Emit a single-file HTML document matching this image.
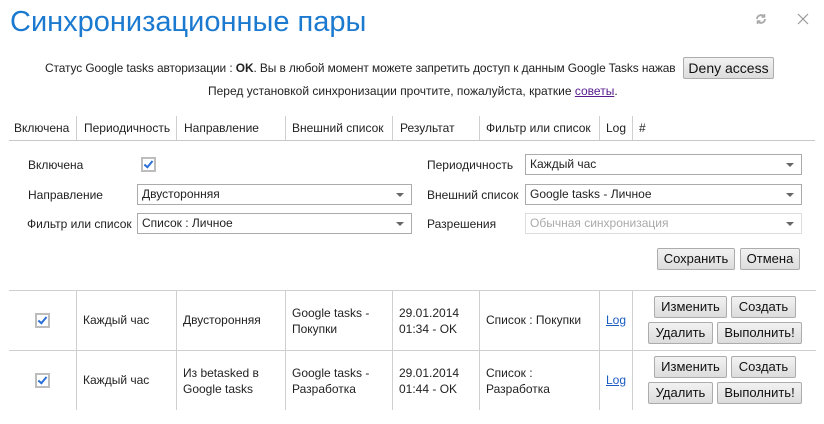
<!DOCTYPE html>
<html><head><meta charset="utf-8"><style>
body{margin:0;width:824px;height:424px;background:#fff;font-family:"Liberation Sans","DejaVu Sans",sans-serif;font-size:12px;color:#222;position:relative;overflow:hidden}
.a{position:absolute;white-space:nowrap}
.btn{position:absolute;border:1px solid #acacac;border-radius:2px;background:linear-gradient(#f2f2f2,#dcdcdc);font-size:13px;color:#111;text-align:center;box-sizing:border-box;line-height:20px;height:22px}
.sel{position:absolute;border:1px solid #ababab;box-sizing:border-box;height:21px;line-height:19px;padding-left:4px;font-size:12px;background:#fff}
.sel:after{content:"";position:absolute;right:7px;top:8px;border-left:4px solid transparent;border-right:4px solid transparent;border-top:4px solid #666}
.vl{position:absolute;width:1px;background:#cfcfcf}
.hl{position:absolute;height:1px;background:#cfcfcf}
.cb{position:absolute;width:11px;height:11px;border:2px solid #bdbdbd;background:#fff}
.cb:after{content:"";position:absolute;left:3px;top:0px;width:3px;height:7px;border:solid #2a6fd8;border-width:0 2px 2px 0;transform:rotate(40deg)}
.lk{color:#1a5bc0;text-decoration:underline}
</style></head><body>
<div class="a" style="left:10px;top:6px;font-size:29px;color:#1b7ad0">Синхронизационные пары</div>
<svg class="a" style="left:755px;top:13px" width="12" height="12" viewBox="0 0 12 12"><path d="M2 6a4 4 0 0 1 7-2.5M10 6a4 4 0 0 1-7 2.5" stroke="#aaa" stroke-width="1.8" fill="none"/><path d="M9.5 1v3h-3M2.5 11V8h3" stroke="#aaa" stroke-width="1.5" fill="none"/></svg>
<svg class="a" style="left:797px;top:13px" width="12" height="12" viewBox="0 0 12 12"><path d="M1 1L11 11M11 1L1 11" stroke="#999" stroke-width="1.2"/></svg>
<div class="a" style="left:45px;top:61px;font-size:11.9px;letter-spacing:-0.08px">Статус Google tasks авторизации : <b>OK</b>. Вы в любой момент можете запретить доступ к данным Google Tasks нажав</div>
<div class="btn" style="left:683px;top:57px;width:91px;font-size:14px">Deny access</div>
<div class="a" style="left:208px;top:84px">Перед установкой синхронизации прочтите, пожалуйста, краткие <span style="color:#551a8b;text-decoration:underline">советы</span>.</div>

<div class="a" style="left:14px;top:121px">Включена</div>
<div class="a" style="left:84px;top:121px">Периодичность</div>
<div class="a" style="left:184px;top:121px">Направление</div>
<div class="a" style="left:292px;top:121px">Внешний список</div>
<div class="a" style="left:400px;top:121px">Результат</div>
<div class="a" style="left:486px;top:121px">Фильтр или список</div>
<div class="a" style="left:606px;top:121px">Log</div>
<div class="a" style="left:639px;top:121px">#</div>
<div class="vl" style="left:76px;top:116px;height:24px"></div>
<div class="vl" style="left:176px;top:116px;height:24px"></div>
<div class="vl" style="left:285px;top:116px;height:24px"></div>
<div class="vl" style="left:392px;top:116px;height:24px"></div>
<div class="vl" style="left:479px;top:116px;height:24px"></div>
<div class="vl" style="left:599px;top:116px;height:24px"></div>
<div class="vl" style="left:632px;top:116px;height:24px"></div>
<div class="hl" style="left:9px;top:140px;width:806px;background:#c8c8c8"></div>

<div class="a" style="left:28px;top:158px">Включена</div>
<div class="cb" style="left:141px;top:157px"></div>
<div class="a" style="left:28px;top:188px">Направление</div>
<div class="sel" style="left:137px;top:184px;width:275px">Двусторонняя</div>
<div class="a" style="left:27px;top:217px">Фильтр или список</div>
<div class="sel" style="left:137px;top:213px;width:275px">Список : Личное</div>
<div class="a" style="left:427px;top:158px">Периодичность</div>
<div class="sel" style="left:525px;top:154px;width:277px">Каждый час</div>
<div class="a" style="left:427px;top:188px">Внешний список</div>
<div class="sel" style="left:525px;top:184px;width:277px">Google tasks - Личное</div>
<div class="a" style="left:427px;top:217px">Разрешения</div>
<div class="sel" style="left:525px;top:213px;width:277px;color:#aaa;border-color:#ddd">Обычная синхронизация</div>
<div class="btn" style="left:657px;top:248px;width:78px">Сохранить</div>
<div class="btn" style="left:740px;top:248px;width:60px">Отмена</div>

<div class="hl" style="left:9px;top:290px;width:807px"></div>
<div class="hl" style="left:9px;top:350px;width:807px"></div>
<div class="vl" style="left:76px;top:290px;height:120px"></div>
<div class="vl" style="left:176px;top:290px;height:120px"></div>
<div class="vl" style="left:285px;top:290px;height:120px"></div>
<div class="vl" style="left:392px;top:290px;height:120px"></div>
<div class="vl" style="left:479px;top:290px;height:120px"></div>
<div class="vl" style="left:599px;top:290px;height:120px"></div>
<div class="vl" style="left:632px;top:290px;height:120px"></div>

<div class="cb" style="left:35px;top:313px"></div>
<div class="a" style="left:83px;top:313px">Каждый час</div>
<div class="a" style="left:183px;top:313px">Двусторонняя</div>
<div class="a" style="left:292px;top:305px;line-height:16px">Google tasks -<br>Покупки</div>
<div class="a" style="left:399px;top:305px;line-height:16px">29.01.2014<br>01:34 - OK</div>
<div class="a" style="left:486px;top:313px">Список : Покупки</div>
<div class="a lk" style="left:606px;top:313px">Log</div>
<div class="btn" style="left:654px;top:296px;width:73px">Изменить</div>
<div class="btn" style="left:731px;top:296px;width:65px">Создать</div>
<div class="btn" style="left:648px;top:322px;width:65px">Удалить</div>
<div class="btn" style="left:717px;top:322px;width:85px">Выполнить!</div>

<div class="cb" style="left:35px;top:373px"></div>
<div class="a" style="left:83px;top:373px">Каждый час</div>
<div class="a" style="left:183px;top:365px;line-height:16px">Из betasked в<br>Google tasks</div>
<div class="a" style="left:292px;top:365px;line-height:16px">Google tasks -<br>Разработка</div>
<div class="a" style="left:399px;top:365px;line-height:16px">29.01.2014<br>01:44 - OK</div>
<div class="a" style="left:486px;top:365px;line-height:16px">Список :<br>Разработка</div>
<div class="a lk" style="left:606px;top:373px">Log</div>
<div class="btn" style="left:654px;top:356px;width:73px">Изменить</div>
<div class="btn" style="left:731px;top:356px;width:65px">Создать</div>
<div class="btn" style="left:648px;top:382px;width:65px">Удалить</div>
<div class="btn" style="left:717px;top:382px;width:85px">Выполнить!</div>
</body></html>
